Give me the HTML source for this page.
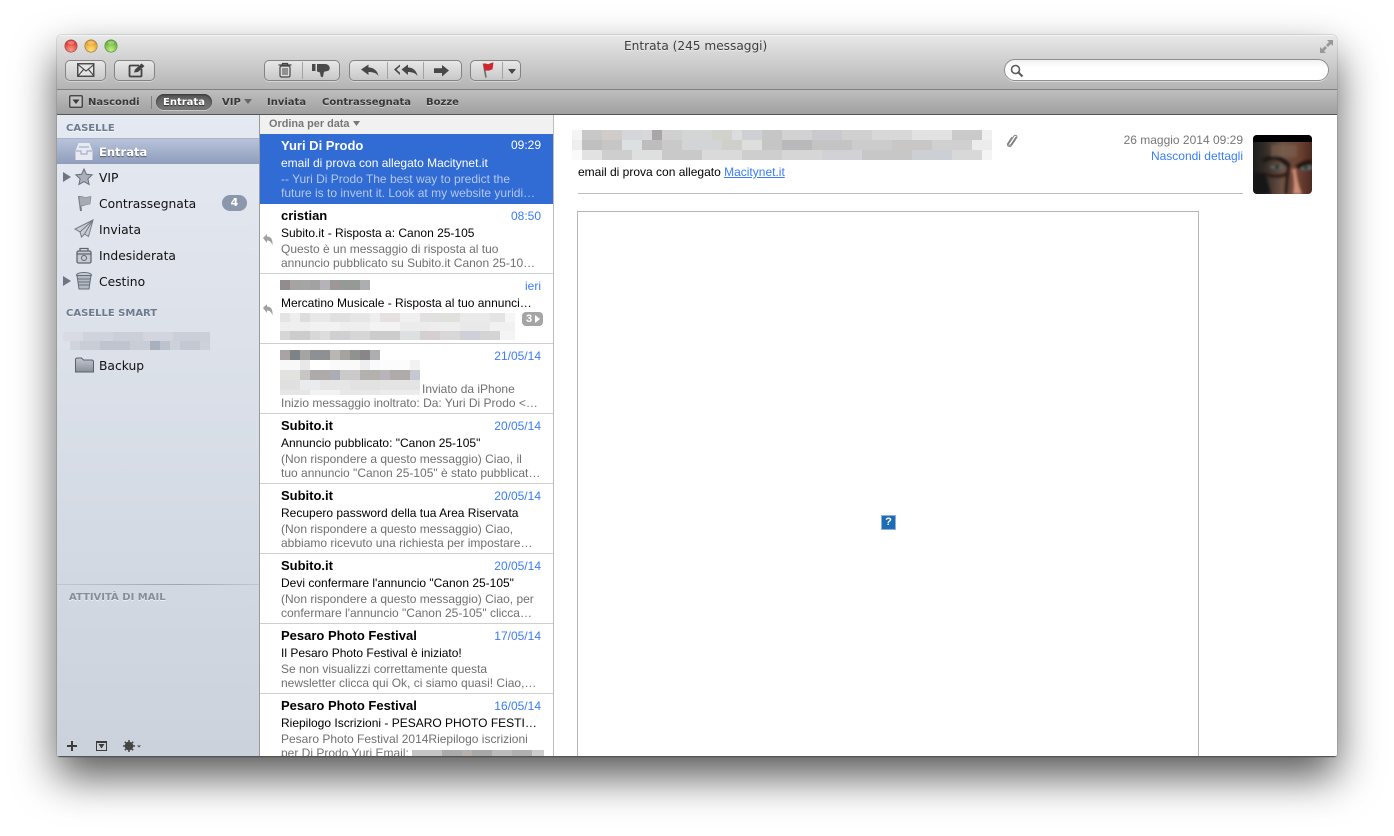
<!DOCTYPE html>
<html><head><meta charset="utf-8"><title>Entrata</title>
<style>
html,body{margin:0;padding:0;background:#fff;width:1394px;height:836px;overflow:hidden}
#win{position:absolute;left:57px;top:35px;width:1280px;height:722px;border-radius:5px 5px 3px 3px;overflow:hidden;box-shadow:0 20px 42px rgba(0,0,0,.65),0 0 0 1px rgba(0,0,0,.1);background:#fff}
#in{position:absolute;left:-57px;top:-35px;width:1394px;height:836px}
.a{position:absolute;white-space:nowrap}
.d{font-family:"DejaVu Sans",sans-serif}
.l{font-family:"Liberation Sans",sans-serif}
#tb{position:absolute;left:57px;top:35px;width:1280px;height:54px;background:linear-gradient(#e8e8e8,#d8d8d8 30%,#b4b4b4);border-top:1px solid #f4f4f4;box-sizing:border-box}
#fb{position:absolute;left:57px;top:89px;width:1280px;height:26px;background:linear-gradient(#bebebe,#a0a0a0);border-top:1px solid #808080;border-bottom:1px solid #555;box-sizing:border-box}
.btn{position:absolute;height:21px;top:60px;box-sizing:border-box;border:1px solid #838383;border-radius:5px;background:linear-gradient(#e8e8e8,#c8c8c8);box-shadow:0 1px 0 rgba(255,255,255,.4)}
.dv{position:absolute;top:62px;width:1px;height:17px;background:#a2a2a2}
.fav{font:bold 10px "DejaVu Sans",sans-serif;color:#383838;text-shadow:0 1px 0 rgba(255,255,255,.45);top:97px}
#side{position:absolute;left:57px;top:115px;width:203px;height:642px;background:linear-gradient(#e5e9f1,#cbd2dc);border-right:1px solid #9b9b9b;box-sizing:border-box}
.h{font:bold 10px "DejaVu Sans",sans-serif;color:#6d7b8f;text-shadow:0 1px 0 rgba(255,255,255,.6)}
.s{font:12.3px "DejaVu Sans",sans-serif;color:#111;left:99px}
#list{position:absolute;left:260px;top:115px;width:294px;height:642px;background:#fff;border-right:1px solid #bdbdbd;box-sizing:border-box}
.r{position:absolute;left:260px;width:293px;height:70px;border-bottom:1px solid #cfcfcf;box-sizing:border-box}
.r div{position:absolute;white-space:nowrap;font-family:"Liberation Sans",sans-serif}
.n{left:21px;top:4px;font-weight:bold;font-size:13px;line-height:15px;color:#000}
.t{right:12px;top:5px;font-size:12px;line-height:15px;color:#3a7cf6}
.j{left:21px;top:22px;font-size:12px;line-height:15px;color:#000;width:260px;overflow:hidden}
.p{left:21px;top:38px;font-size:12px;line-height:14px;color:#707070;width:264px;overflow:hidden}
.b{position:absolute;height:10px}
svg{position:absolute;overflow:visible}
</style></head><body>
<div id="win"><div id="in">
<div id="tb"></div>
<div id="fb"></div>

<!-- traffic lights -->
<svg style="left:60px;top:38px" width="60" height="16">
<defs>
<radialGradient id="r1" cx=".5" cy=".8" r=".75"><stop offset="0" stop-color="#ff9a88"/><stop offset="1" stop-color="#d8281e"/></radialGradient>
<radialGradient id="r2" cx=".5" cy=".8" r=".75"><stop offset="0" stop-color="#ffe27a"/><stop offset="1" stop-color="#e2901a"/></radialGradient>
<radialGradient id="r3" cx=".5" cy=".8" r=".75"><stop offset="0" stop-color="#c4ef80"/><stop offset="1" stop-color="#55a82a"/></radialGradient>
</defs>
<circle cx="11" cy="8" r="6.2" fill="url(#r1)" stroke="#8a5a58" stroke-width=".6"/>
<circle cx="31" cy="8" r="6.2" fill="url(#r2)" stroke="#8f7a4a" stroke-width=".6"/>
<circle cx="51" cy="8" r="6.2" fill="url(#r3)" stroke="#5f8550" stroke-width=".6"/>
<ellipse cx="11" cy="4.500" rx="3.500" ry="1.700" fill="#fff" opacity=".3"/>
<ellipse cx="31" cy="4.500" rx="3.500" ry="1.700" fill="#fff" opacity=".3"/>
<ellipse cx="51" cy="4.500" rx="3.500" ry="1.700" fill="#fff" opacity=".3"/>
</svg>
<div class="a d" style="left:624px;top:39px;font-size:12.15px;line-height:15px;color:#3c3c3c;text-shadow:0 1px 0 rgba(255,255,255,.5)">Entrata (245 messaggi)</div>
<svg style="left:1319px;top:39px" width="15" height="15"><path d="M8 1h6v6l-2-2-3 3-2-2 3-3zM7 14H1V8l2 2 3-3 2 2-3 3z" fill="#989898"/></svg>

<!-- toolbar buttons -->
<div class="btn" style="left:65px;width:41px"></div>
<svg style="left:77px;top:63px" width="18" height="15"><rect x=".75" y=".75" width="16" height="12.500" fill="#e4e4e4" stroke="#444" stroke-width="1.400"/><path d="M1 1.500l8 6.500 8-6.500M1 13l5.500-6.500M17 13l-5.500-6.500" fill="none" stroke="#444" stroke-width="1.100"/></svg>
<div class="btn" style="left:114px;width:41px"></div>
<svg style="left:128px;top:62px" width="18" height="16"><path d="M11 3.500H2.500q-1 0-1 1v9q0 1 1 1h10q1 0 1-1V7" fill="none" stroke="#444" stroke-width="1.800"/><path d="M6 10.500l1-3 6.500-6 3 2.500-6.500 6z" fill="#444"/></svg>

<div class="btn" style="left:264px;width:76px"></div><div class="dv" style="left:302px"></div>
<svg style="left:278px;top:62px" width="14" height="16"><path d="M.5 3h13M4.500 3V1.500h5V3" fill="none" stroke="#444" stroke-width="1.300"/><rect x="2" y="4" width="10" height="11" rx="1.500" fill="#ddd" stroke="#444" stroke-width="1.200"/><path d="M5 6v7M7 6v7M9 6v7" stroke="#444"/></svg>
<svg style="left:312px;top:63px" width="19" height="15"><rect x="0" y="1" width="3.500" height="7" fill="#4a4a4a"/><path d="M5 1h7.500c2.500 0 4.500 1 5 3 .500 2 0 3.500-2 4l-3.500.8-1 5c-1 1-2.500 0-2.500-1.500L8 9.500 5 8.500z" fill="#4a4a4a"/></svg>

<div class="btn" style="left:349px;width:113px"></div><div class="dv" style="left:387px"></div><div class="dv" style="left:423px"></div>
<svg style="left:361px;top:64px" width="18" height="13"><path d="M0 5.500L7.500.5v3c5 0 9 3 10 8.500C15.500 9 12 8 7.500 8v3z" fill="#484848"/></svg>
<svg style="left:394px;top:64px" width="24" height="13"><path d="M6 .5v2L2.500 5.500 6 8.800V11L0 5.500zM14 .5v3c5 0 8.500 3 9.500 8.500C21.500 9 18 8 14 8v3L7.500 5.500z" fill="#484848"/></svg>
<svg style="left:434px;top:65px" width="15" height="12"><path d="M15 5.500L8 0v3.200H0v4.800h8v3.500z" fill="#484848"/></svg>

<div class="btn" style="left:470px;width:51px"></div><div class="dv" style="left:502px"></div>
<svg style="left:481px;top:62px" width="14" height="16"><path d="M2.500 1.500l2.500 14" stroke="#6a6a6a" stroke-width="1.600"/><path d="M2.500 2c2.500-1.500 4 .8 5.500 0s3-1.500 4.500-1.500l-1 7c-1.500 0-3 1.200-4.500 1.200s-2-.5-3.500.3z" fill="#cf2630"/></svg>
<svg style="left:508px;top:69px" width="8" height="5"><path d="M0 0h8L4 5z" fill="#484848"/></svg>

<!-- search -->
<div class="a" style="left:1004px;top:59px;width:325px;height:22px;box-sizing:border-box;border:1px solid #8e8e8e;border-radius:11px;background:linear-gradient(#f2f2f2,#fff 40%);box-shadow:0 1px 0 rgba(255,255,255,.5)"></div>
<svg style="left:1010px;top:64px" width="14" height="14"><circle cx="5.500" cy="5.500" r="4" fill="none" stroke="#5a5a5a" stroke-width="1.600"/><path d="M8.500 8.500l4 4" stroke="#5a5a5a" stroke-width="2"/></svg>

<!-- favorites bar -->
<svg style="left:69px;top:95px" width="14" height="13"><rect x=".75" y=".75" width="12.500" height="11.500" rx="1" fill="#c4c4c4" stroke="#3a3a3a" stroke-width="1.300"/><path d="M3.500 4.500h7l-3.500 4.500z" fill="#3a3a3a"/></svg>
<div class="a fav" style="left:88px">Nascondi</div>
<div class="a" style="left:151px;top:96px;width:1px;height:13px;background:#808080"></div>
<div class="a" style="left:156px;top:94px;width:56px;height:16px;border-radius:8px;background:linear-gradient(#585858,#787878);box-shadow:inset 0 1px 2px #333,0 1px 0 rgba(255,255,255,.4)"></div>
<div class="a fav" style="left:163px;color:#fff;text-shadow:0 1px 1px #333">Entrata</div>
<div class="a fav" style="left:222px">VIP</div>
<svg style="left:244px;top:99px" width="8" height="5"><path d="M0 0h8L4 5z" fill="#666"/></svg>
<div class="a fav" style="left:267px">Inviata</div>
<div class="a fav" style="left:322px">Contrassegnata</div>
<div class="a fav" style="left:426px">Bozze</div>

<!-- sidebar -->
<div id="side"></div>
<div class="a h" style="left:66px;top:123px">CASELLE</div>
<div class="a" style="left:57px;top:138px;width:202px;height:26px;box-sizing:border-box;border-top:1px solid #a9b3c9;background:linear-gradient(#b8c3da,#8f9dbc)"></div>
<svg style="left:75px;top:142px" width="18" height="19"><path d="M3.500 1h11l3 8v9H.5V9z" fill="#e7eaf1"/><path d="M4 5h10M1 9h5v3h6V9h5" fill="none" stroke="#a6b1c9" stroke-width="1.200"/></svg>
<div class="a s" style="top:145px;color:#fff;font-weight:bold;font-size:11.500px;text-shadow:0 1px 1px #556">Entrata</div>
<svg style="left:63px;top:172px" width="8" height="10"><path d="M0 0l8 5-8 5z" fill="#6f7582"/></svg>
<svg style="left:75px;top:168px" width="18" height="17"><path d="M9 1l2.400 5.300 5.800.6-4.300 3.900 1.200 5.700L9 13.600l-5.100 2.900 1.200-5.700L.8 6.900l5.800-.6z" fill="#aab0bb" stroke="#666c77"/></svg>
<div class="a s" style="top:171px">VIP</div>
<svg style="left:77px;top:195px" width="16" height="17"><path d="M2 1l2 15" stroke="#777" stroke-width="2"/><path d="M2 1.500c3-1 5 1.500 7 1s3-1 5-1l-1 7.500c-2 .5-4 .5-6 1.500s-2.500 0-4 .5z" fill="#a5aab4" stroke="#7c818b" stroke-width=".6"/></svg>
<div class="a s" style="top:197px">Contrassegnata</div>
<div class="a d" style="left:222px;top:195px;width:25px;height:16px;border-radius:8px;background:#8b97ab;color:#fff;font-size:11px;font-weight:bold;line-height:16px;text-align:center">4</div>
<svg style="left:75px;top:220px" width="18" height="18"><path d="M18 0L0 9l5 3 1.500 5 3-3 4 2.500z" fill="#c8cdd6" stroke="#757a83"/><path d="M18 0L5 12M18 0L9.500 14" stroke="#757a83" fill="none"/></svg>
<div class="a s" style="top:223px">Inviata</div>
<svg style="left:76px;top:247px" width="16" height="17"><rect x="1" y="4" width="14" height="12" rx="1.500" fill="#c6cbd4" stroke="#60656e" stroke-width="1.300"/><path d="M4 4V1.500h8V4M1 7h14" fill="none" stroke="#60656e" stroke-width="1.300"/><circle cx="8" cy="11" r="2.500" fill="none" stroke="#60656e"/></svg>
<div class="a s" style="top:249px">Indesiderata</div>
<svg style="left:63px;top:276px" width="8" height="10"><path d="M0 0l8 5-8 5z" fill="#6f7582"/></svg>
<svg style="left:76px;top:272px" width="16" height="18"><ellipse cx="8" cy="3" rx="7.500" ry="2.500" fill="#c9ced6" stroke="#666b75"/><path d="M1 3.500L3 17h10l2-13.500z" fill="#b4bac4" stroke="#666b75"/><path d="M2 7h12M2.500 10h11M3 13h10" stroke="#6d727c"/></svg>
<div class="a s" style="top:275px">Cestino</div>
<div class="a h" style="left:66px;top:308px">CASELLE SMART</div>
<div class="b" style="left:63px;top:332px;width:147px;height:9px;background:linear-gradient(90deg,#d8dbe3 20px,#cfd3dc 0 50px,#cacfd8 0 80px,#d2d5dd 0 110px,#cbcfd7 0 147px)"></div>
<div class="b" style="left:70px;top:341px;width:140px;height:9px;background:linear-gradient(90deg,#d0d4dc 10px,#c8cdd6 0 30px,#bfc4cf 0 60px,#c8cdd6 0 80px,#a8b0bd 0 90px,#bdc3ce 0 100px,#cdd1d9 0 110px,#c3c8d3 0 130px,#cdd1d9 0 140px)"></div>
<svg style="left:75px;top:357px" width="19" height="16"><path d="M.5 3q0-2 2-2h4l2 2h8q2 0 2 2v10H.5z" fill="url(#fold)" stroke="#5b616b"/><defs><linearGradient id="fold" x1="0" y1="0" x2="0" y2="1"><stop offset="0" stop-color="#c2c6ce"/><stop offset="1" stop-color="#8a909b"/></linearGradient></defs></svg>
<div class="a s" style="top:359px">Backup</div>
<div class="a" style="left:57px;top:584px;width:202px;height:1px;background:linear-gradient(90deg,#c0c7d2,#9aa6b6 60%,#c0c7d2)"></div>
<div class="a h" style="left:69px;top:592px;color:#888d98">ATTIVITÀ DI MAIL</div>
<svg style="left:67px;top:741px" width="10" height="10"><path d="M4 0h2v4h4v2H6v4H4V6H0V4h4z" fill="#3c3c3c"/></svg>
<svg style="left:96px;top:741px" width="11" height="10"><rect x=".5" y=".5" width="10" height="9" fill="none" stroke="#3c3c3c"/><path d="M0 0h11v2H0zM2.500 3h6l-3 4.500z" fill="#3c3c3c"/></svg>
<svg style="left:123px;top:740px" width="18" height="12"><circle cx="6" cy="6" r="3.200" fill="none" stroke="#444" stroke-width="2.200"/><path d="M6 0v12M0 6h12M1.800 1.800l8.400 8.400M10.200 1.800l-8.400 8.400" stroke="#444" stroke-width="1.500"/><path d="M14 5.500h4L16 7.500z" fill="#444"/></svg>

<!-- list -->
<div id="list"></div>
<div class="a" style="left:260px;top:115px;width:293px;height:19px;background:#f1f1f1"></div>
<div class="a l" style="left:269px;top:117px;font-size:10.900px;font-weight:bold;line-height:15px;color:#777">Ordina per data</div>
<svg style="left:353px;top:121px" width="7" height="5"><path d="M0 0h7L3.500 5z" fill="#777"/></svg>

<div class="r" style="top:134px;height:70px;background:#316bd4;border-bottom:0">
<div class="n" style="color:#fff">Yuri Di Prodo</div><div class="t" style="color:#fff;top:4px">09:29</div>
<div class="j" style="color:#fff">email di prova con allegato Macitynet.it</div>
<div class="p" style="color:#b4c8f0">-- Yuri Di Prodo The best way to predict the<br>future is to invent it. Look at my website yuridi…</div></div>

<div class="r" style="top:204px"><div class="n">cristian</div><div class="t">08:50</div>
<div class="j">Subito.it - Risposta a: Canon 25-105</div>
<div class="p">Questo è un messaggio di risposta al tuo<br>annuncio pubblicato su Subito.it Canon 25-10…</div></div>

<div class="r" style="top:274px"><div class="t">ieri</div>
<div class="j">Mercatino Musicale - Risposta al tuo annunci…</div></div>

<div class="r" style="top:344px"><div class="t">21/05/14</div>
<div class="p" style="left:162px;top:38px;width:120px">Inviato da iPhone</div>
<div class="p" style="top:52px">Inizio messaggio inoltrato: Da: Yuri Di Prodo &lt;…</div></div>

<div class="r" style="top:414px"><div class="n">Subito.it</div><div class="t">20/05/14</div>
<div class="j">Annuncio pubblicato: "Canon 25-105"</div>
<div class="p">(Non rispondere a questo messaggio) Ciao, il<br>tuo annuncio "Canon 25-105" è stato pubblicat…</div></div>

<div class="r" style="top:484px"><div class="n">Subito.it</div><div class="t">20/05/14</div>
<div class="j">Recupero password della tua Area Riservata</div>
<div class="p">(Non rispondere a questo messaggio) Ciao,<br>abbiamo ricevuto una richiesta per impostare…</div></div>

<div class="r" style="top:554px"><div class="n">Subito.it</div><div class="t">20/05/14</div>
<div class="j">Devi confermare l'annuncio "Canon 25-105"</div>
<div class="p">(Non rispondere a questo messaggio) Ciao, per<br>confermare l'annuncio "Canon 25-105" clicca…</div></div>

<div class="r" style="top:624px"><div class="n">Pesaro Photo Festival</div><div class="t">17/05/14</div>
<div class="j">Il Pesaro Photo Festival è iniziato!</div>
<div class="p">Se non visualizzi correttamente questa<br>newsletter clicca qui Ok, ci siamo quasi! Ciao,…</div></div>

<div class="r" style="top:694px;height:63px;border-bottom:0;overflow:hidden"><div class="n">Pesaro Photo Festival</div><div class="t">16/05/14</div>
<div class="j">Riepilogo Iscrizioni - PESARO PHOTO FESTI…</div>
<div class="p">Pesaro Photo Festival 2014Riepilogo iscrizioni<br>per Di Prodo Yuri Email:</div></div>

<!-- reply arrows -->
<svg style="left:263px;top:234px" width="10" height="12"><path d="M0 4l4-4v2.500c4 0 6 3 5.500 9-1-3.500-3-5-5.500-5V9z" fill="#a0a0a0"/></svg>
<svg style="left:263px;top:304px" width="10" height="12"><path d="M0 4l4-4v2.500c4 0 6 3 5.500 9-1-3.500-3-5-5.500-5V9z" fill="#a0a0a0"/></svg>

<!-- list blurs -->
<div class="b" style="left:280px;top:280px;width:90px;background:linear-gradient(90deg,#918d8f 10px,#a7a3a3 0 20px,#a4a6a4 0 30px,#a2a2a2 0 40px,#b6b3b8 0 50px,#9d9897 0 60px,#959a94 0 80px,#aeadb0 0 90px)"></div>
<div class="b" style="left:280px;top:313px;width:235px;height:9px;background:linear-gradient(90deg,#e4e4e4 10px,#eee 0 20px,#ddd 0 30px,#e8e8e8 0 50px,#e0e0e0 0 70px,#e6e6e6 0 90px,#eee 0 100px,#e6e0e0 0 120px,#f0f0f0 0 140px,#e2e0e0 0 160px,#e0e0dc 0 180px,#eaeaea 0 210px,#e4e4e4 0 225px,#f6f6f6 0 235px)"></div>
<div class="b" style="left:280px;top:322px;width:235px;height:9px;background:linear-gradient(90deg,#efefef 30px,#f2f2f2 0 60px,#eee 0 90px,#f3f3f3 0 120px,#ececec 0 150px,#eee 0 180px,#e9e9e9 0 210px,#f1f1f1 0 235px)"></div>
<div class="b" style="left:280px;top:331px;width:235px;height:9px;background:linear-gradient(90deg,#d6d6d6 10px,#ccc 0 30px,#d8d8d8 0 40px,#ddd 0 50px,#d0d0d0 0 70px,#d6d6d6 0 90px,#ccc 0 120px,#dde0e0 0 140px,#d5cfcf 0 160px,#d8d8d8 0 180px,#ced0d8 0 200px,#d4d4d4 0 220px,#f4f4f4 0 235px)"></div>
<div class="a" style="left:522px;top:312px;width:21px;height:14px;border-radius:4px;background:#a5a5a5"></div>
<div class="a l" style="left:526px;top:312px;font-size:11px;font-weight:bold;line-height:14px;color:#fff">3</div>
<svg style="left:535px;top:315px" width="5" height="8"><path d="M0 0l5 4-5 4z" fill="#fff"/></svg>

<div class="b" style="left:280px;top:350px;width:100px;background:linear-gradient(90deg,#aaa3a3 10px,#7f8386 0 20px,#a4a4a2 0 30px,#8d9194 0 50px,#bab7b2 0 60px,#a5a3a0 0 70px,#90928f 0 80px,#8a8588 0 90px,#aeaeb0 0 100px)"></div>
<div class="b" style="left:280px;top:360px;width:140px;background:linear-gradient(90deg,#f8f8f8 20px,#e8e8e8 0 30px,#fff 0 50px,#fafafa 0 80px,#eee 0 90px,#fafafa 0 100px,#fcfcfc 0 130px,#f2f2f2 0 140px)"></div>
<div class="b" style="left:280px;top:370px;width:140px;background:linear-gradient(90deg,#e2e2e0 20px,#c8c6c4 0 30px,#aeaaaa 0 50px,#abadb5 0 60px,#cacaca 0 80px,#b3b1ae 0 100px,#b8b4ba 0 110px,#b0abab 0 130px,#c5c8d0 0 140px)"></div>
<div class="b" style="left:280px;top:380px;width:140px;background:linear-gradient(90deg,#e0e0e0 20px,#e9ebee 0 40px,#e6e6e6 0 70px,#e2e2e2 0 100px,#e4e4e4 0 140px)"></div>
<div class="b" style="left:280px;top:390px;width:140px;height:5px;background:linear-gradient(90deg,#e6e6e6 30px,#f2f2f2 0 60px,#e8e8e8 0 100px,#ececec 0 140px)"></div>
<div class="b" style="left:412px;top:750px;width:132px;height:7px;background:linear-gradient(90deg,#c4c4c4 30px,#aaa 0 50px,#b8b0ac 0 60px,#a8a8a8 0 80px,#bbb 0 100px,#b0b0b0 0 120px,#ccc 0 132px)"></div>

<!-- message header -->
<div class="b" style="left:572px;top:130px;width:420px;background:linear-gradient(90deg,#f4f4f4 10px,#c8c8c8 0 30px,#d0ccca 0 50px,#d4d6da 0 70px,#d8d8d8 0 80px,#a8a6a8 0 90px,#d0d0d0 0 110px,#d4d6d6 0 140px,#d2d2cc 0 160px,#dcdcdc 0 170px,#ced0d4 0 190px,#c6c6c6 0 210px,#d2d2d2 0 240px,#c9c9ce 0 270px,#d0d0d0 0 300px,#d8d8d8 0 340px,#e2e2e2 0 380px,#cacaca 0 410px,#f0f0f0 0 420px)"></div>
<div class="b" style="left:572px;top:140px;width:420px;background:linear-gradient(90deg,#eee 10px,#c0c0c0 0 30px,#c6c6c6 0 50px,#dce0e0 0 70px,#bebcbc 0 90px,#c9c9c9 0 110px,#d2d4d8 0 150px,#d0d0ca 0 170px,#dedfdc 0 190px,#c5c5c5 0 210px,#b9b9bc 0 240px,#c4c4c4 0 280px,#cccccc 0 320px,#c9c6c6 0 360px,#d0d0d0 0 400px,#ececec 0 420px)"></div>
<div class="b" style="left:572px;top:150px;width:420px;background:linear-gradient(90deg,#fafafa 10px,#e2e2e2 0 30px,#cecece 0 60px,#dee0e0 0 90px,#c9c9c9 0 130px,#dadada 0 170px,#cecece 0 210px,#d6d6d6 0 250px,#d2d2d6 0 290px,#c7c7c7 0 340px,#ccd0d4 0 380px,#d8d8d8 0 410px,#f4f4f4 0 420px)"></div>
<svg style="left:1006px;top:133px" width="12" height="15"><path d="M10 4L5 11.500c-1 1.500-3 .5-2.200-1L8 3c1-1.500 3.500-.5 2.800 1.500L5.500 12.500c-1.500 2-5 .5-3.800-2L6 4" fill="none" stroke="#808080" stroke-width="1"/></svg>
<div class="a l" style="right:151px;top:133px;font-size:12px;line-height:15px;color:#777">26 maggio 2014 09:29</div>
<div class="a l" style="right:151px;top:149px;font-size:12px;line-height:15px;color:#3a7cf6">Nascondi dettagli</div>
<div class="a l" style="left:578px;top:165px;font-size:12px;line-height:15px;color:#000">email di prova con allegato <span style="color:#3a7cf6;text-decoration:underline">Macitynet.it</span></div>
<div class="a" style="left:578px;top:193px;width:665px;height:1px;background:#bcbcbc"></div>

<!-- avatar -->
<svg style="left:1253px;top:135px;border-radius:4px;overflow:hidden" width="59" height="59" viewBox="0 0 59 59">
<defs><linearGradient id="sk" x1="0" x2="1" y1="0" y2="0"><stop offset="0" stop-color="#1c1e1c"/><stop offset=".18" stop-color="#2f2924"/><stop offset=".5" stop-color="#6d5244"/><stop offset=".8" stop-color="#6c4030"/><stop offset="1" stop-color="#4a2a22"/></linearGradient>
<filter id="bl"><feGaussianBlur stdDeviation="1.300"/></filter></defs>
<rect width="59" height="59" fill="url(#sk)"/>
<g filter="url(#bl)">
<path d="M10 26q14-9 26 5" fill="none" stroke="#1e1512" stroke-width="4.500"/>
<path d="M44 33q6-6 15-6" fill="none" stroke="#22120e" stroke-width="4.500"/>
<path d="M16 32q8-4 16 1-8 3-16-1z" fill="#566a72"/>
<path d="M47 34q5-4 12-3v3q-6 3-12 0z" fill="#5c7276"/>
<circle cx="24" cy="32" r="2" fill="#20282c"/>
<circle cx="53" cy="33" r="1.800" fill="#20282c"/>
<path d="M12 39q12 5 24-1" fill="none" stroke="#2a1e18" stroke-width="3"/>
<path d="M36 30q-2 12-3 29" fill="none" stroke="#2a1a14" stroke-width="3"/>
<path d="M39 34q3 12 1 25h9q-5-12-6-25z" fill="#cf8f76"/>
<path d="M0 38h12l6 21H0z" fill="#141614"/>
<path d="M18 10h26v12H18z" fill="#7d6453" opacity=".55"/>
</g>
<rect width="59" height="7" fill="#000"/>
</svg>

<!-- body box -->
<div class="a" style="left:577px;top:211px;width:622px;height:560px;box-sizing:border-box;border:1px solid #b5b5b5"></div>
<div class="a" style="left:881px;top:515px;width:15px;height:15px;box-sizing:border-box;border:1px solid #8fb0d8;background:#1e6cb4;color:#fff;font:bold 11px/13px 'Liberation Sans',sans-serif;text-align:center">?</div>
<div class="a" style="left:57px;top:756px;width:1280px;height:1px;background:#555"></div>
</div></div>
</body></html>
